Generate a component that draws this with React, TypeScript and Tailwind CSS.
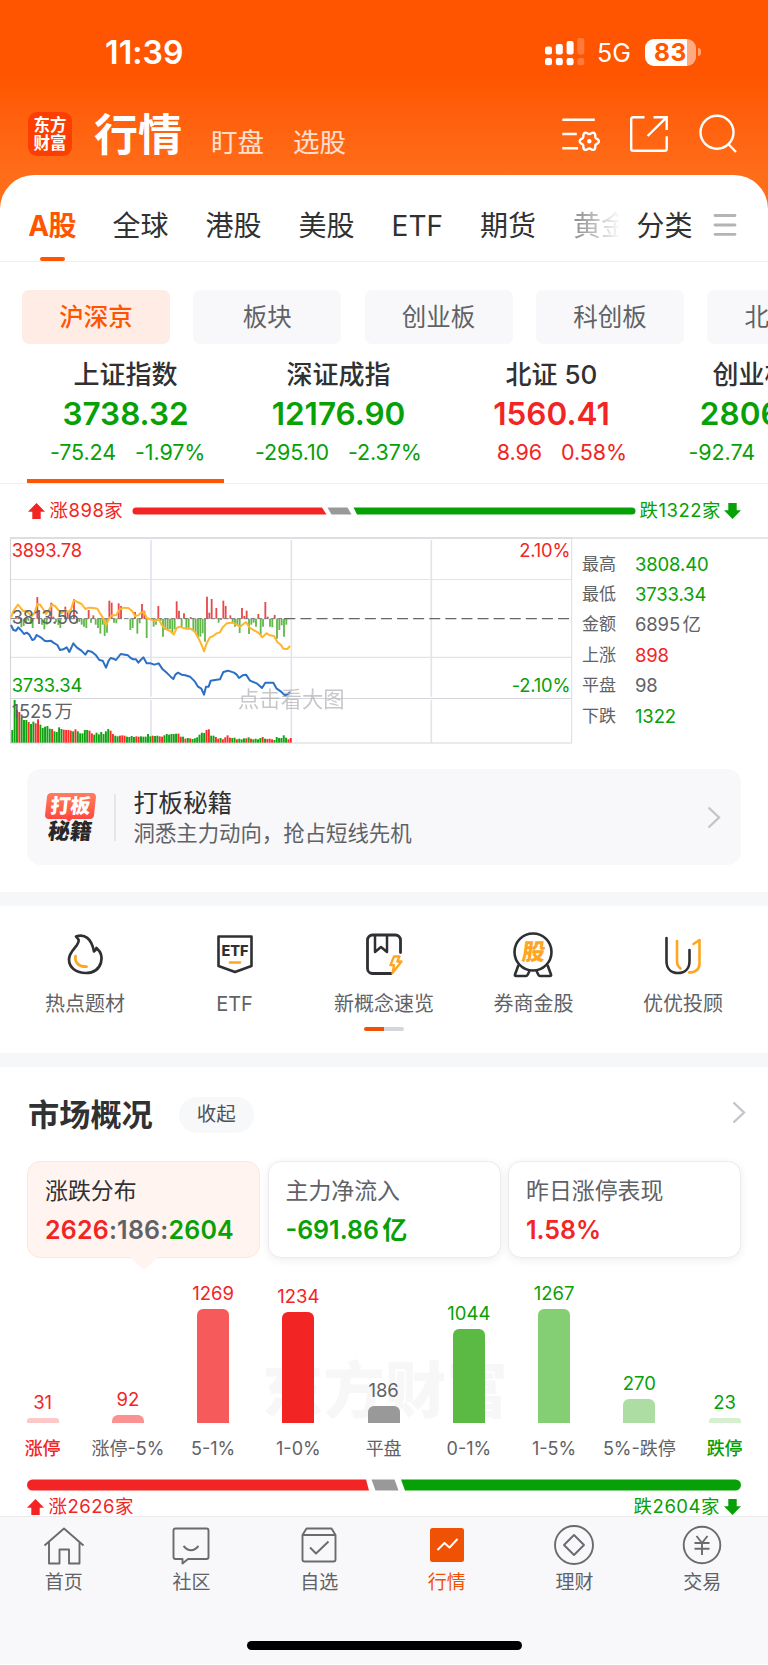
import React from "react";

const RED = "text-[#f32424]";
const GREEN = "text-[#07a007]";

/* ---------- Status bar and header ---------- */

function SignalIcon() {
  return (
    <svg width="40" height="28" viewBox="0 0 40 28" fill="#fff">
      <rect x="0" y="8.500" width="7" height="8" rx="2.200" />
      <rect x="10.800" y="6" width="7" height="10.500" rx="2.200" />
      <rect x="21.600" y="3" width="7" height="13.500" rx="2.200" />
      <rect x="32.300" y="0" width="7" height="16.500" rx="2.200" opacity=".22" />
      <rect x="0" y="20" width="7" height="7.200" rx="2.200" />
      <rect x="10.800" y="20" width="7" height="7.200" rx="2.200" />
      <rect x="21.600" y="20" width="7" height="7.200" rx="2.200" />
      <rect x="32.300" y="20" width="7" height="7.200" rx="2.200" opacity=".22" />
    </svg>
  );
}

function Battery() {
  return (
    <div className="flex items-center">
      <div className="flex h-[27px] w-[51px] items-center justify-center rounded-[9px] bg-linear-to-r from-white from-[83%] to-[#ffaa80] to-[83%] text-[24.500px] font-bold tracking-[0.500px] text-[#ff5800]">
        83
      </div>
      <div className="ml-[1.500px] h-[8px] w-[3px] rounded-r-full bg-[#ffa070]" />
    </div>
  );
}

/* Six-lobed gear outline centred on the origin. */
const GEAR = Array.from({ length: 72 }, (_, i) => {
  const a = (i * Math.PI) / 36;
  const r = 8.4 + 1.2 * Math.cos(6 * a);
  return `${(r * Math.cos(a)).toFixed(2)},${(r * Math.sin(a)).toFixed(2)}`;
}).join(" ");

function HeaderIcons() {
  return (
    <svg width="190" height="44" viewBox="0 0 190 44" fill="none" stroke="#fff" strokeWidth="2.400">
      <g transform="translate(2 2)">
        <path d="M.3 5.700h32.500M.3 20h14.500M.3 34.300H16" />
        <polygon points={GEAR} strokeLinejoin="round" transform="translate(27.300 27.300)" />
        <circle cx="27.300" cy="27.300" r="2.200" fill="#fff" stroke="none" />
      </g>
      <g transform="translate(69 1.500)">
        <path strokeLinejoin="round" d="M15.500 3.800H4.200c-1.300 0-2 .7-2 2v29.400c0 1.300.7 2 2 2h31.500c1.300 0 2-.7 2-2V22.800" />
        <path d="M24.500 3.800h13.200v12.600M37.300 4.200 18.600 22.500" />
      </g>
      <circle cx="157" cy="20.200" r="16.500" />
      <path d="m168.300 32 7.700 8" />
    </svg>
  );
}

function Header() {
  return (
    <header className="h-[175px] shrink-0 bg-linear-to-b from-[#ff5500] from-[42%] to-[#ff6d19] text-white">
      <div className="flex h-[104px] items-center pl-[105px]">
        <div className="w-[440px] pt-[1px] text-[32px] font-semibold tracking-[0.100px]">11:39</div>
        <SignalIcon />
        <div className="ml-[12px] w-[48px] pt-[3px] text-[25px]">5G</div>
        <Battery />
      </div>
      <div className="flex h-[60px] items-center pl-[28px]">
        <div className="flex h-[44px] w-[44px] flex-col items-center justify-center rounded-[9px] bg-[#fd3e03] text-[16.500px] leading-[18px] font-bold">
          <span>东方</span>
          <span>财富</span>
        </div>
        <h1 className="ml-[22px] w-[88px] pt-[1px] text-[44px] leading-[60px] font-bold">行情</h1>
        <span className="ml-[29px] w-[53px] pt-[17px] text-[26.500px] text-white/80">盯盘</span>
        <span className="ml-[29px] w-[53px] pt-[17px] text-[26.500px] text-white/80">选股</span>
        <div className="ml-[214px]">
          <HeaderIcons />
        </div>
      </div>
    </header>
  );
}

/* ---------- Market tabs ---------- */

function MarketTabs() {
  return (
    <div className="shrink-0 bg-[#ff6d19]">
      <nav className="flex h-[87px] items-start rounded-t-[34px] border-b border-[#eeeff1] bg-white pl-[28.500px] text-[28px] leading-[42px] text-[#303133]">
        <div className="flex w-[590px] gap-[37px] overflow-hidden pt-[30px] whitespace-nowrap">
          <div className="flex w-[47px] flex-col items-center font-bold tracking-[-0.800px] text-[#ff5500]">
            A股
            <span className="mt-[10px] h-[4px] w-[25px] rounded-sm bg-[#ff5500]" />
          </div>
          <span>全球</span>
          <span>港股</span>
          <span>美股</span>
          <span className="w-[53px]">ETF</span>
          <span>期货</span>
          <span className="bg-linear-to-r from-[#8a8a8a] to-[#ffffff] to-[48px] bg-clip-text text-transparent">黄金</span>
        </div>
        <span className="ml-[18px] pt-[30px]">分类</span>
        <svg className="mt-[37px] ml-[20px]" width="24" height="26" stroke="#b4b4b6" strokeWidth="2.800" strokeLinecap="round">
          <path d="M2 3.500h20M2 13h20M2 22.300h20" />
        </svg>
      </nav>
    </div>
  );
}

function BoardChips() {
  return (
    <div className="mt-[28px] flex h-[54px] shrink-0 gap-[23.300px] overflow-hidden pl-[22px] text-[24.500px] text-[#606266]">
      <div className="flex w-[148px] shrink-0 items-center justify-center rounded-[7px] bg-[#ffede5] pt-[1px] font-medium text-[#ff5500]">
        沪深京
      </div>
      {["板块", "创业板", "科创板", "北交所"].map((name) => (
        <div key={name} className="flex w-[148px] shrink-0 items-center justify-center rounded-[7px] bg-[#f8f8fa] pt-[1px]">
          {name}
        </div>
      ))}
    </div>
  );
}

/* ---------- Indices ---------- */

const INDICES = [
  { name: "上证指数", value: "3738.32", diff: "-75.24", pct: "-1.97%", up: false },
  { name: "深证成指", value: "12176.90", diff: "-295.10", pct: "-2.37%", up: false },
  { name: "北证 50", value: "1560.41", diff: "8.96", pct: "0.58%", up: true },
  { name: "创业板指", value: "2806.86", diff: "-92.74", pct: "-3.20%", up: false },
];

function IndexStrip() {
  return (
    <div className="flex h-[140px] shrink-0 overflow-hidden border-b border-[#eeeff1] pl-[19px]">
      {INDICES.map((item, i) => (
        <div key={item.name} className="flex w-[213px] shrink-0 flex-col items-center whitespace-nowrap">
          <div className="mt-[13px] h-[36px] text-[26px] leading-[36px] font-medium text-[#303133]">{item.name}</div>
          <div className={`h-[40px] pt-[1px] text-[31.500px] leading-[40px] font-semibold ${item.up ? RED : GREEN}`}>{item.value}</div>
          <div className={`mt-[4px] grid h-[30px] w-full grid-cols-2 gap-[19px] text-[21.500px] leading-[30px] tracking-[-0.100px] ${item.up ? RED : GREEN}`}>
            <span className="text-right">{item.diff}</span>
            <span>{item.pct}</span>
          </div>
          {i === 0 && <div className="mt-[12px] h-[4px] w-[197px] bg-[#ff5500]" />}
        </div>
      ))}
    </div>
  );
}

function ArrowUp() {
  return (
    <svg width="17" height="16" viewBox="0 0 17 16" fill="#f32424">
      <path d="M8.500 0 17 8.700h-4.300V16H4.300V8.700H0z" />
    </svg>
  );
}

function ArrowDown() {
  return (
    <svg width="17" height="16" viewBox="0 0 17 16" fill="#07a007">
      <path d="M8.500 16 0 7.300h4.300V0h8.400v7.300H17z" />
    </svg>
  );
}

function BreadthBar() {
  return (
    <div className="flex h-[53px] shrink-0 items-center pt-[1px] pl-[27.500px] text-[18.500px]">
      <ArrowUp />
      <span className={`ml-[5px] w-[82px] tracking-[0.500px] whitespace-nowrap ${RED}`}>涨898家</span>
      <svg width="504" height="8" viewBox="0 0 504 8">
        <path d="M4 .5h186l4.500 7H4a3.500 3.500 0 0 1 0-7z" fill="#f32424" />
        <path d="M195.500.5h20l4 7h-20z" fill="#999" />
        <path d="M221.500.5H500a3.500 3.500 0 0 1 0 7H225z" fill="#07a007" />
      </svg>
      <span className={`ml-[4px] w-[84px] tracking-[0.500px] whitespace-nowrap ${GREEN}`}>跌1322家</span>
      <ArrowDown />
    </div>
  );
}

/* ---------- Intraday chart ---------- */

const AVERAGE_LINE =
  "33,262 42,240 54,224 62,234 70,243 78,243 86,250 96,258 104,248 112,222 120,224 130,238 138,252 148,238 156,224 165,228 175,240 185,250 195,240 205,246 213,238 222,210 232,216 245,222 256,237 266,233 282,234 292,236 300,250 308,262 318,286 328,264 336,256 348,256 360,237 372,233 385,234 397,244 405,258 415,256 423,248 432,246 440,264 452,268 465,274 476,268 487,288 500,298 512,304 521,314 530,294 540,290 552,295 572,296 585,306 597,328 605,345 612,364 620,340 630,322 640,318 650,310 660,307 668,292 680,280 695,278 710,284 720,290 738,276 748,292 760,300 775,308 787,322 800,310 810,316 822,318 832,336 842,344 850,356 862,357 870,348";

const PRICE_LINE =
  "33,285 40,300 48,302 55,292 64,302 72,312 80,308 88,314 97,330 103,328 110,315 122,322 134,332 142,334 152,332 160,338 172,345 180,360 190,358 200,352 208,366 220,340 230,352 244,362 256,374 264,362 276,366 288,376 298,390 308,392 318,413 326,392 332,384 340,386 348,390 362,372 384,376 392,384 400,388 408,388 415,398 422,390 430,382 440,400 452,400 463,404 476,400 488,418 502,430 512,440 520,447 526,434 534,428 545,434 556,436 570,440 585,455 594,470 604,476 612,494 618,470 626,470 632,452 645,450 660,448 670,426 684,422 702,428 710,434 717,444 728,436 738,434 750,452 770,460 786,474 796,458 820,458 830,476 842,484 856,497 864,492 870,486";

const UP_TICKS = [
  [48, 258], [112, 201], [154, 218], [160, 260], [196, 230], [203, 245], [222, 207], [266, 240], [280, 256],
  [328, 212], [335, 218], [356, 220], [363, 228], [405, 246], [426, 222], [433, 242], [475, 228], [530, 214],
  [537, 242], [552, 250], [572, 261], [621, 200], [628, 248], [635, 207], [649, 234], [670, 212], [677, 228],
  [691, 256], [726, 234], [733, 258], [740, 242], [775, 252], [796, 216], [803, 260], [824, 255],
];

const DOWN_TICKS = [
  [64, 292], [71, 288], [78, 280], [85, 272], [92, 282], [98, 294], [126, 284], [133, 298], [140, 284], [168, 276],
  [175, 285], [181, 294], [231, 280], [238, 276], [245, 284], [252, 290], [259, 294], [273, 278], [287, 284],
  [294, 294], [301, 311], [308, 284], [314, 318], [321, 308], [342, 278], [349, 280], [391, 300], [398, 294],
  [412, 311], [419, 280], [440, 324], [461, 290], [468, 284], [482, 272], [489, 320], [496, 300], [503, 302],
  [510, 298], [517, 308], [524, 298], [545, 294], [559, 298], [566, 298], [580, 300], [587, 308], [594, 322],
  [601, 320], [608, 310], [615, 335], [656, 278], [663, 270], [698, 276], [705, 290], [712, 286], [719, 309],
  [747, 312], [754, 284], [761, 278], [768, 290], [782, 315], [789, 290], [810, 290], [817, 292], [831, 326],
  [838, 300], [845, 286], [852, 320], [859, 284],
];

const VOLUME_TOPS = [
  600, 510, 540, 546, 560, 570, 570, 576, 582, 575, 580, 568, 584, 594, 590, 588, 596, 597, 604, 606,
  592, 597, 599, 600, 600, 602, 604, 598, 604, 610, 610, 600, 600, 602, 610, 614, 608, 613, 606, 612,
  604, 597, 602, 612, 617, 619, 617, 616, 617, 620, 621, 618, 621, 619, 620, 619, 620, 620, 612, 619,
  617, 618, 617, 619, 620, 616, 612, 614, 612, 612, 611, 611, 620, 620, 626, 624, 625, 627, 625, 622,
  614, 608, 609, 600, 598, 617, 617, 621, 626, 624, 628, 622, 616, 623, 624, 623, 628, 626, 628, 625,
  625, 622, 626, 628, 626, 628, 624, 621, 626, 627, 626, 628, 630, 621, 624, 624, 616, 623, 628, 624,
];
const VOLUME_COLORS =
  "GGGRGGGRGGRRGGGGGRGGGGRRRRGRGGGGGRRGGGGGGGRRGGRRRGGGGRRGGGGGRGGRRGGGGGGRRGRGRGGGGGGRRGGRRGRRRRGGRGGGRGRGGGGRGRRRGGGGGGRR";

function IntradayChart() {
  return (
    <svg width="575" height="207" viewBox="0 21 1725 621" className="shrink-0">
      <g stroke="#e2e4ec" strokeWidth="5">
        <path d="M453 30v470M453 510v128M874 30v470M874 510v128M1294 30v470M1294 510v128" />
        <path d="M32 148.500h1683M32 382h1683" strokeWidth="3.500" />
      </g>
      <path d="M31.500 24V639H1715.500" fill="none" stroke="#d4d6dc" strokeWidth="3.500" />
      <path d="M32 505.500h1683" stroke="#d4d6dc" strokeWidth="3.500" />
      <path d="M1715 24v615" stroke="#d8dce6" strokeWidth="3" />
      <g stroke="#e8494b" strokeWidth="5.500">
        {UP_TICKS.map(([x, y]) => (
          <path key={x} d={`M${x} 266V${y}`} />
        ))}
      </g>
      <g stroke="#62b84a" strokeWidth="5.500">
        {DOWN_TICKS.map(([x, y]) => (
          <path key={x} d={`M${x} 266V${y}`} />
        ))}
      </g>
      {VOLUME_TOPS.map((top, i) => (
        <rect
          key={i}
          x={34 + i * 7.02}
          y={top}
          width="5.800"
          height={638 - top}
          fill={VOLUME_COLORS[i] === "R" ? "#ff2a2a" : "#0fa312"}
        />
      ))}
      <path d="M32 266h840" stroke="#777" strokeWidth="3" strokeDasharray="14 6" />
      <path d="M853 266h862" stroke="#666" strokeWidth="4" strokeDasharray="33 15.300" />
      <polyline points={AVERAGE_LINE} fill="none" stroke="#ffb52e" strokeWidth="6" strokeLinejoin="round" />
      <polyline points={PRICE_LINE} fill="none" stroke="#2b6fc6" strokeWidth="6" strokeLinejoin="round" />
      <g className="text-[55px] tracking-[-0.500px]">
        <text x="35" y="80" fill="#f32424">3893.78</text>
        <text x="35" y="283" fill="#606266">3813.56</text>
        <text x="35" y="486" fill="#07a007">3733.34</text>
        <text x="35" y="563" fill="#606266">1525<tspan dx="8">万</tspan></text>
        <text x="1711" y="80" textAnchor="end" fill="#f32424">2.10%</text>
        <text x="1711" y="486" textAnchor="end" fill="#07a007">-2.10%</text>
      </g>
      <text x="714" y="530" fill="#b0b0b4" className="text-[64px]" opacity=".7">点击看大图</text>
    </svg>
  );
}

const STATS = [
  ["最高", "3808.40", GREEN],
  ["最低", "3733.34", GREEN],
  ["金额", "6895 亿", "text-[#606266]"],
  ["上涨", "898", RED],
  ["平盘", "98", "text-[#606266]"],
  ["下跌", "1322", GREEN],
];

function ChartPanel() {
  return (
    <div className="flex h-[207px] shrink-0">
      <div className="relative flex w-full before:absolute before:top-0 before:left-[10px] before:h-[2px] before:w-[562px] before:bg-[#dcdee3] after:absolute after:top-0 after:right-0 after:h-[2px] after:w-[196px] after:bg-[#e4e6ea]">
        <IntradayChart />
        <dl className="pt-[11.500px] pl-[7px] text-[18.500px] leading-[30.400px]">
          {STATS.map(([label, value, tone]) => (
            <div key={label} className="flex">
              <dt className="w-[53px] text-[17px] text-[#606266]">{label}</dt>
              <dd className={`tracking-[-0.150px] [word-spacing:-2.500px] ${tone}`}>{value}</dd>
            </div>
          ))}
        </dl>
      </div>
    </div>
  );
}

/* ---------- Promo banner ---------- */

function Chevron() {
  return (
    <svg width="14" height="23" viewBox="0 0 14 23" fill="none" stroke="#c4c5c9" strokeWidth="2.400">
      <path d="m1.500 1.500 10.500 10-10.500 10" />
    </svg>
  );
}

function Banner() {
  return (
    <div className="mx-[27px] mt-[25px] flex h-[96px] shrink-0 items-center rounded-[14px] bg-[#f8f8fa] pl-[18px]">
      <div className="flex h-[48px] w-[51px] flex-col items-center">
        <div className="relative flex h-[26px] w-[49px] -skew-x-6 items-center justify-center rounded-[4px] bg-linear-to-b from-[#ff7d5e] to-[#ff4740] text-[20px] font-black text-white after:absolute after:-bottom-[2px] after:size-[5px] after:rotate-45 after:bg-[#ff4740]">
          打板
        </div>
        <div className="mt-[1px] -skew-x-6 text-[22px] leading-[22px] font-black text-[#28282a]">秘籍</div>
      </div>
      <div className="ml-[18px] h-[47px] w-[2px] bg-[#e6e6e9]" />
      <div className="ml-[17.500px] w-[573px]">
        <div className="text-[24.700px] leading-[33px] text-[#303133]">打板秘籍</div>
        <div className="-mt-[1px] text-[21.400px] leading-[29px] text-[#606266]">洞悉主力动向，抢占短线先机</div>
      </div>
      <Chevron />
    </div>
  );
}

/* ---------- Quick entries ---------- */

const INK = "#2f3033";
const AMBER = "#ffa51f";

function FlameIcon() {
  return (
    <svg width="48" height="48" viewBox="0 0 48 48" fill="none" stroke={INK} strokeWidth="2.700" strokeLinecap="round" strokeLinejoin="round">
      <path d="M15 6.500C23.500 3.500 30.500 8 33 21.500c1.500-1 2-2 2.500-3.500C40 22 41.500 27.500 40 32.500 38 39 32.500 43 25 43 15 43 8 37.500 8 29.500 8 20 19.500 15.500 17.500 9.500z" />
      <path d="M14.500 26c-1 6 3 11 11 10.700" stroke={AMBER} />
    </svg>
  );
}

function EtfIcon() {
  return (
    <svg width="48" height="48" viewBox="0 0 48 48" fill="none" stroke={INK} strokeWidth="2.600" strokeLinejoin="round">
      <path d="M7.500 6.500h33v29.500L24 42 7.500 36z" />
      <path d="M19 32.500h10" stroke={AMBER} strokeLinecap="round" />
      <text x="24" y="26" textAnchor="middle" fill={INK} stroke="none" className="text-[14.500px] font-extrabold">
        ETF
      </text>
    </svg>
  );
}

function BookIcon() {
  return (
    <svg width="48" height="48" viewBox="0 0 48 48" fill="none" stroke={INK} strokeWidth="2.800" strokeLinecap="round" strokeLinejoin="round">
      <path d="M31 43.500H12.500a5 5 0 0 1-5-5V10a5 5 0 0 1 5-5h23a5 5 0 0 1 5 5v12.500" />
      <path d="M15 5.500v16.500l6-5 6 5V5.500" strokeWidth="2.500" />
      <path d="M34 26.500h5.500l-2.200 5h4.200l-9 11.500 1.500-7.800h-3.600z" stroke={AMBER} strokeWidth="2.300" />
    </svg>
  );
}

function MedalIcon() {
  return (
    <svg width="48" height="48" viewBox="0 0 48 48" fill="none" stroke={INK} strokeWidth="2.600" strokeLinejoin="round">
      <circle cx="24" cy="22" r="18.500" />
      <path d="M9.500 35 6 44.500q-.5 1.500 1 1.500h10q1 0 1.500-1l2-4M38.500 35l3.500 9.500q.5 1.500-1 1.500H31q-1 0-1.500-1l-2-4" />
      <text x="28" y="30.500" textAnchor="middle" fill={AMBER} stroke="none" className="text-[23px] font-black" transform="skewX(-8)">
        股
      </text>
    </svg>
  );
}

function AdvisorIcon() {
  return (
    <svg width="48" height="48" viewBox="0 0 48 48" fill="none" stroke={INK} strokeWidth="2.600" strokeLinecap="round" strokeLinejoin="round">
      <path d="M7.500 8v23c0 8 5 12 11.500 12s11.500-4 11.500-12V20" />
      <path d="M18 11v20c0 3.500 1 5.500 3.500 7.500M34.500 14l6-4v23c0 6-3.500 9.500-10.500 9.500" stroke={AMBER} />
    </svg>
  );
}

const ENTRIES = [
  { label: "热点题材", icon: <FlameIcon /> },
  { label: "ETF", icon: <EtfIcon /> },
  { label: "新概念速览", icon: <BookIcon /> },
  { label: "券商金股", icon: <MedalIcon /> },
  { label: "优优投顾", icon: <AdvisorIcon /> },
];

function QuickEntries() {
  return (
    <div className="mt-[27px] h-[175px] shrink-0 border-t-[14px] border-b-[14px] border-[#f6f7f9]">
      <div className="grid grid-cols-5 px-[10.300px] pt-[24px]">
        {ENTRIES.map((entry) => (
          <div key={entry.label} className="flex flex-col items-center">
            {entry.icon}
            <div className="mt-[10px] text-[20px] leading-[32px] text-[#606266]">{entry.label}</div>
          </div>
        ))}
      </div>
      <div className="mx-auto mt-[7px] h-[4px] w-[40px] rounded-full bg-linear-to-r from-[#f05205] from-50% to-[#d3d6dc] to-50%" />
    </div>
  );
}

/* ---------- Market overview ---------- */

function OverviewHeader() {
  return (
    <div className="flex h-[94px] shrink-0 items-center pl-[28px]">
      <h2 className="pt-[3px] text-[31.200px] font-bold text-[#303133]">市场概况</h2>
      <div className="mt-[2px] ml-[26px] flex h-[36px] w-[75px] items-center justify-center rounded-full bg-[#f7f8fa] text-[19.500px] text-[#505256]">
        收起
      </div>
      <div className="-mt-[3px] ml-[478.500px]">
        <Chevron />
      </div>
    </div>
  );
}

function OverviewCards() {
  const plain =
    "h-[97px] w-[233px] rounded-[13px] border border-[#ececee] bg-white pt-[10px] pl-[17px] shadow-[0_2px_10px_rgba(0,0,0,0.07)]";
  return (
    <div className="mt-[-1px] flex h-[112px] shrink-0 gap-[7.500px] pt-[1px] pl-[27px] text-[22.900px] leading-[39px] text-[#606266]">
      <div className="relative h-[97px] w-[233px] rounded-[13px] border border-[#ffe6dc] bg-[#fff4ef] pt-[10px] pl-[17px]">
        <div className="text-[#303133]">涨跌分布</div>
        <div className="text-[25px] leading-[38px] font-semibold tracking-[0.200px]">
          <span className={RED}>2626</span>:<span>186</span>:<span className={GREEN}>2604</span>
        </div>
        <svg className="absolute top-[94px] left-[102px]" width="28" height="14" viewBox="0 0 28 14">
          <path d="M0 1h28L16 12q-2 2-4 0z" fill="#fff4ef" />
        </svg>
      </div>
      <div className={plain}>
        <div>主力净流入</div>
        <div className={`text-[25px] leading-[38px] font-semibold [word-spacing:-3px] ${GREEN}`}>-691.86 亿</div>
      </div>
      <div className={plain}>
        <div>昨日涨停表现</div>
        <div className={`text-[25px] leading-[38px] font-semibold ${RED}`}>1.58%</div>
      </div>
    </div>
  );
}

const BARS = [
  { label: "涨停", value: 31, height: 5, bar: "bg-[#fdc8c8] rounded-t-[3px]", tone: RED, strong: "text-[#f32424] font-medium" },
  { label: "涨停-5%", value: 92, height: 8, bar: "bg-[#fb9292] rounded-t-[6px]", tone: RED, strong: "" },
  { label: "5-1%", value: 1269, height: 114, bar: "bg-[#f75a5a] rounded-t-[6px]", tone: RED, strong: "" },
  { label: "1-0%", value: 1234, height: 111, bar: "bg-[#f32424] rounded-t-[6px]", tone: RED, strong: "" },
  { label: "平盘", value: 186, height: 17, bar: "bg-[#999999] rounded-t-[6px]", tone: "text-[#606266]", strong: "" },
  { label: "0-1%", value: 1044, height: 94, bar: "bg-[#5aba43] rounded-t-[6px]", tone: GREEN, strong: "" },
  { label: "1-5%", value: 1267, height: 114, bar: "bg-[#84ce74] rounded-t-[6px]", tone: GREEN, strong: "" },
  { label: "5%-跌停", value: 270, height: 24, bar: "bg-[#aedda3] rounded-t-[6px]", tone: GREEN, strong: "" },
  { label: "跌停", value: 23, height: 5, bar: "bg-[#d6efd1] rounded-t-[3px]", tone: GREEN, strong: "text-[#07a007] font-medium" },
];

function Distribution() {
  return (
    <div className="relative flex h-[191px] shrink-0">
      <div className="absolute top-[79px] left-[262px] text-[61px] leading-[80px] font-black tracking-[0.500px] text-[#f7f7f8]">
        东方财富
      </div>
      {BARS.map((item) => (
        <div key={item.label} className="relative flex w-[85.250px] shrink-0 flex-col items-center">
          <div className="flex h-[151px] flex-col items-center justify-end">
            <span className={`text-[18.500px] leading-[22px] ${item.tone}`}>{item.value}</span>
            <div className={`mt-[5.500px] w-[32px] shrink-0 ${item.bar}`} style={{ height: item.height }} />
          </div>
          <div className={`mt-[14px] text-[18px] leading-[24px] whitespace-nowrap ${item.strong || "text-[#606266]"}`}>
            {item.label}
          </div>
        </div>
      ))}
    </div>
  );
}

function OverviewBreadth() {
  return (
    <div className="h-[53px] shrink-0 overflow-hidden px-[27px] pt-[16px] text-[18.500px]">
      <svg width="714" height="12" viewBox="0 0 714 12">
        <path d="M5.500.5H339l3 11H5.500a5.500 5.500 0 0 1 0-11z" fill="#f32424" />
        <path d="M344.500.5h23l4 11h-23z" fill="#999" />
        <path d="M374 .5h334.500a5.500 5.500 0 0 1 0 11H378z" fill="#07a007" />
      </svg>
      <div className="mt-[4px] flex h-[24px] items-center justify-between">
        <div className={`flex items-center gap-[4.500px] tracking-[0.500px] ${RED}`}>
          <ArrowUp />
          涨2626家
        </div>
        <div className={`flex items-center gap-[4px] tracking-[0.500px] ${GREEN}`}>
          跌2604家
          <ArrowDown />
        </div>
      </div>
    </div>
  );
}

/* ---------- Bottom navigation ---------- */

function NavIcon({ children }: { children: React.ReactNode }) {
  return (
    <svg width="44" height="44" viewBox="0 0 44 44" fill="none" stroke="#6a6b6f" strokeWidth="1.900" strokeLinejoin="round">
      {children}
    </svg>
  );
}

const NAV = [
  {
    label: "首页",
    icon: (
      <NavIcon>
        <path d="M2.500 22.500 22 5.500l19.500 17M7 19v21.500h10.500V26.500h9.500v14h10.500V19" />
      </NavIcon>
    ),
  },
  {
    label: "社区",
    icon: (
      <NavIcon>
        <path d="M6.500 5.500h31a2 2 0 0 1 2 2v26.500a2 2 0 0 1-2 2H19l-5.500 4.500V36h-7a2 2 0 0 1-2-2V7.500a2 2 0 0 1 2-2zM14.500 23q7.500 8.500 15 0" />
      </NavIcon>
    ),
  },
  {
    label: "自选",
    icon: (
      <NavIcon>
        <path d="m9.500 5.500-4 6.500v24.500a2 2 0 0 0 2 2h29a2 2 0 0 0 2-2V12l-4-6.500zM5.500 12h33M13 24.500l6 6 12.500-12" />
      </NavIcon>
    ),
  },
  {
    label: "行情",
    icon: (
      <NavIcon>
        <rect x="5" y="5" width="34" height="34" rx="2.500" fill="#f05205" stroke="none" />
        <path d="m12.500 27 7-7 5 4.500 8-8.500" stroke="#fff" strokeWidth="2" />
      </NavIcon>
    ),
    active: true,
  },
  {
    label: "理财",
    icon: (
      <NavIcon>
        <circle cx="22" cy="22" r="19" />
        <path d="m22 12 10 10-10 10-10-10z" />
      </NavIcon>
    ),
  },
  {
    label: "交易",
    icon: (
      <NavIcon>
        <circle cx="22" cy="22" r="18.300" />
        <path d="m16.500 13 5.500 7 5.500-7M22 20v12M14.500 20h15M14.500 25.700h15" />
      </NavIcon>
    ),
  },
];

function BottomNav() {
  return (
    <footer className="flex h-[148px] shrink-0 flex-col border-t border-[#ebebee] bg-[#f8f8fb]">
      <div className="grid h-[124px] w-[766px] grid-cols-6 pt-[6px]">
        {NAV.map((item) => (
          <div key={item.label} className={`flex flex-col items-center ${item.active ? "text-[#f05205]" : "text-[#606266]"}`}>
            {item.icon}
            <span className="mt-[2px] text-[19px] leading-[28px]">{item.label}</span>
          </div>
        ))}
      </div>
      <div className="mx-auto h-[9px] w-[275px] rounded-full bg-black" />
    </footer>
  );
}

export default function App() {
  return (
    <div className="flex h-[1665px] w-[768px] flex-col overflow-hidden bg-white font-['Inter','Noto_Sans_CJK_SC',sans-serif]">
      <Header />
      <MarketTabs />
      <BoardChips />
      <IndexStrip />
      <BreadthBar />
      <ChartPanel />
      <Banner />
      <QuickEntries />
      <OverviewHeader />
      <OverviewCards />
      <Distribution />
      <OverviewBreadth />
      <BottomNav />
    </div>
  );
}
